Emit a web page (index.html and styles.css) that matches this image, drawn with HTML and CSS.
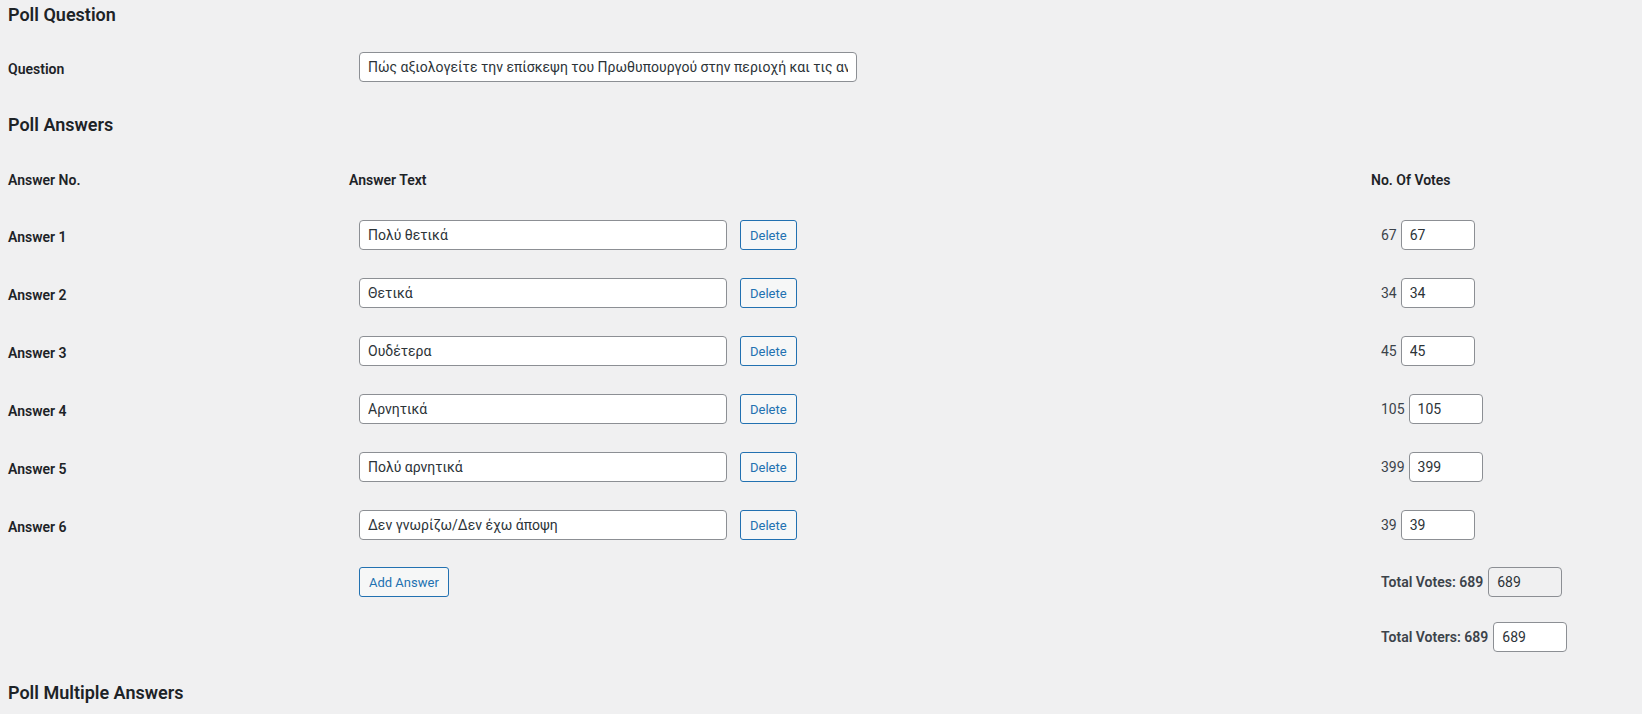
FILE: index.html
```html
<!DOCTYPE html>
<html lang="el">
<head>
    <meta charset="UTF-8">
    <meta name="viewport" content="width=device-width, initial-scale=1.0">
    <title>Edit Poll</title>
    <link rel="stylesheet" href="styles.css">
</head>
<body>
    <h3 class="section-title">Poll Question</h3>
    <div class="form-row question-row">
        <label class="row-label" for="pollq_question">Question</label>
        <div class="cell">
            <input type="text" class="text-input question-input" id="pollq_question" value="Πώς αξιολογείτε την επίσκεψη του Πρωθυπουργού στην περιοχή και τις ανακοινώσεις του;">
        </div>
    </div>

    <h3 class="section-title answers-title">Poll Answers</h3>
    <div class="answers">
        <div class="form-row head-row">
            <span class="col-head">Answer No.</span>
            <span class="col-head">Answer Text</span>
            <span class="col-head">No. Of Votes</span>
        </div>

        <div class="form-row answer-row">
            <span class="row-label">Answer 1</span>
            <div class="cell">
                <input type="text" class="text-input answer-input" value="Πολύ θετικά">
                <button class="button">Delete</button>
            </div>
            <div class="cell votes">
                <span>67</span>
                <input type="text" class="text-input votes-input" value="67">
            </div>
        </div>

        <div class="form-row answer-row">
            <span class="row-label">Answer 2</span>
            <div class="cell">
                <input type="text" class="text-input answer-input" value="Θετικά">
                <button class="button">Delete</button>
            </div>
            <div class="cell votes">
                <span>34</span>
                <input type="text" class="text-input votes-input" value="34">
            </div>
        </div>

        <div class="form-row answer-row">
            <span class="row-label">Answer 3</span>
            <div class="cell">
                <input type="text" class="text-input answer-input" value="Ουδέτερα">
                <button class="button">Delete</button>
            </div>
            <div class="cell votes">
                <span>45</span>
                <input type="text" class="text-input votes-input" value="45">
            </div>
        </div>

        <div class="form-row answer-row">
            <span class="row-label">Answer 4</span>
            <div class="cell">
                <input type="text" class="text-input answer-input" value="Αρνητικά">
                <button class="button">Delete</button>
            </div>
            <div class="cell votes">
                <span>105</span>
                <input type="text" class="text-input votes-input" value="105">
            </div>
        </div>

        <div class="form-row answer-row">
            <span class="row-label">Answer 5</span>
            <div class="cell">
                <input type="text" class="text-input answer-input" value="Πολύ αρνητικά">
                <button class="button">Delete</button>
            </div>
            <div class="cell votes">
                <span>399</span>
                <input type="text" class="text-input votes-input" value="399">
            </div>
        </div>

        <div class="form-row answer-row">
            <span class="row-label">Answer 6</span>
            <div class="cell">
                <input type="text" class="text-input answer-input" value="Δεν γνωρίζω/Δεν έχω άποψη">
                <button class="button">Delete</button>
            </div>
            <div class="cell votes">
                <span>39</span>
                <input type="text" class="text-input votes-input" value="39">
            </div>
        </div>

        <div class="form-row add-row">
            <span></span>
            <div class="cell">
                <button class="button">Add Answer</button>
            </div>
            <div class="cell votes">
                <strong>Total Votes: 689</strong>
                <input type="text" class="text-input votes-input" value="689" readonly>
            </div>
        </div>

        <div class="form-row voters-row">
            <span></span>
            <span></span>
            <div class="cell votes">
                <strong>Total Voters: 689</strong>
                <input type="text" class="text-input votes-input" value="689">
            </div>
        </div>
    </div>

    <h3 class="section-title multi-title">Poll Multiple Answers</h3>
</body>
</html>
```

FILE: styles.css
```css
body {
    margin: 0;
    padding: 0 8px;
    background-color: #f0f0f1;
    color: #3c434a;
    font-family: Roboto, "Noto Sans", sans-serif;
    font-size: 14px;
    overflow: hidden;
}
.section-title {
    margin: 0;
    height: 30px;
    line-height: 30px;
    font-size: 18px;
    font-weight: 600;
    color: #1d2327;
}
.answers-title {
    margin-top: 28px;
}
.multi-title {
    margin-top: 26px;
}
.form-row {
    display: grid;
    grid-template-columns: 341px 1022px 1fr;
    align-items: center;
    height: 30px;
}
.question-row {
    grid-template-columns: 341px 1fr;
    margin-top: 22px;
}
.answers {
    display: flex;
    flex-direction: column;
    gap: 28px;
    margin-top: 30px;
}
.head-row {
    height: 20px;
    margin-bottom: 2px;
}
.add-row {
    margin-top: -1px;
}
.voters-row {
    margin-top: -3px;
}
.row-label,
.col-head {
    font-weight: 600;
    color: #1d2327;
}
.row-label {
    padding-top: 4px;
}
.cell {
    display: flex;
    align-items: center;
    gap: 13px;
    padding-left: 10px;
}
.votes {
    gap: 4px;
}
.votes strong {
    font-weight: 600;
    color: #3c434a;
    margin-right: 1px;
}
.text-input {
    box-sizing: border-box;
    height: 30px;
    padding: 0 8px;
    border: 1px solid #8c8f94;
    border-radius: 4px;
    background-color: #fff;
    color: #2c3338;
    font-family: inherit;
    font-size: 14px;
}
.text-input[readonly] {
    background-color: #f0f0f1;
}
.question-input {
    width: 498px;
}
.answer-input {
    width: 368px;
}
.votes-input {
    width: 74px;
}
.button {
    box-sizing: border-box;
    height: 30px;
    padding: 0 9px;
    border: 1px solid #2271b1;
    border-radius: 3px;
    background-color: #f6f7f7;
    color: #2271b1;
    font-family: inherit;
    font-size: 13px;
    cursor: pointer;
}
```
